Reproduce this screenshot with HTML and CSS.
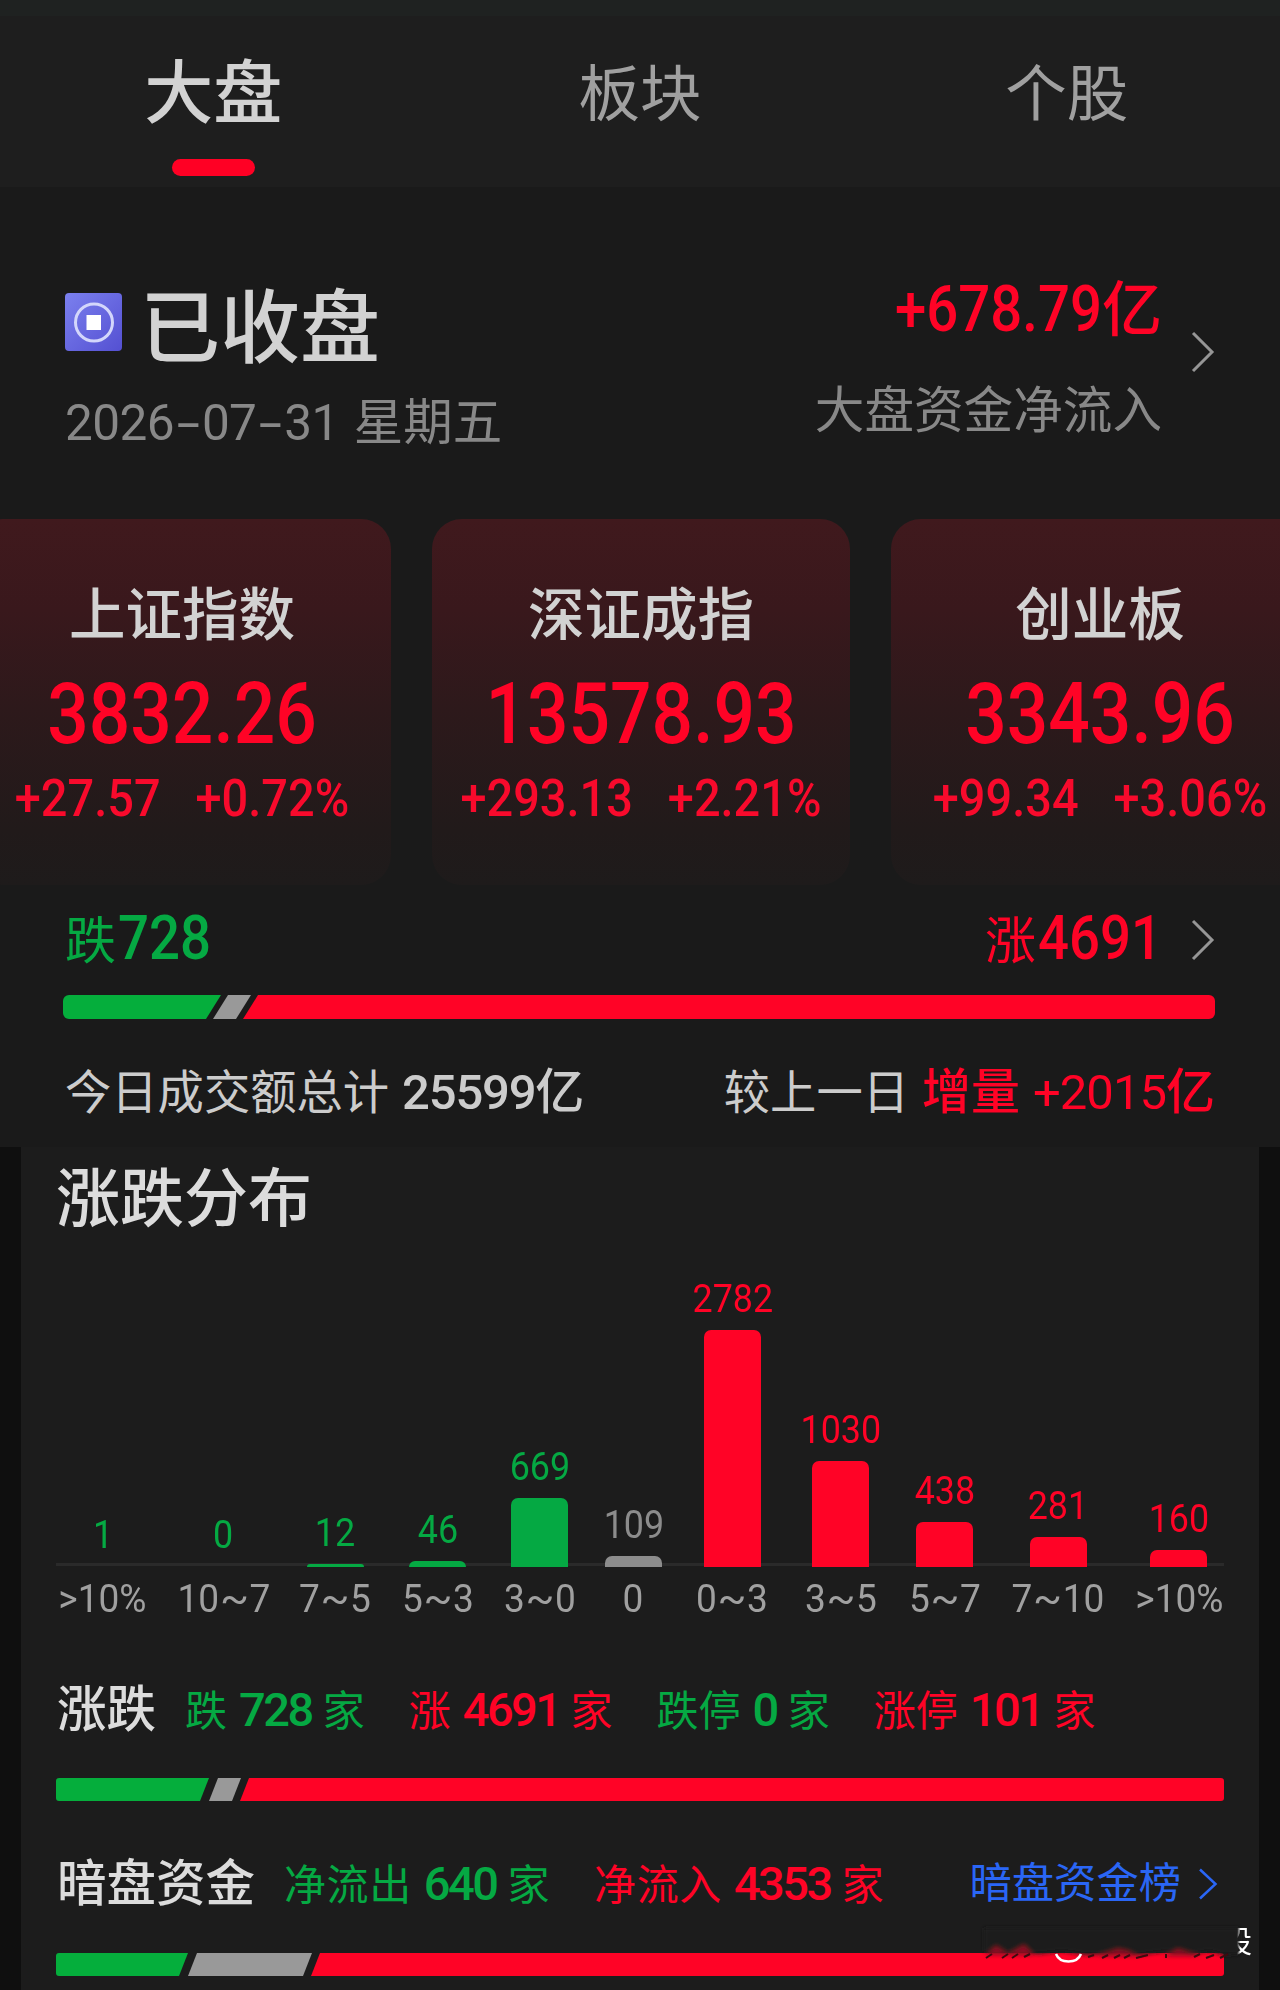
FILE: index.html
```html
<!DOCTYPE html>
<html lang="zh-CN">
<head>
    <meta charset="UTF-8">
    <meta name="viewport" content="width=device-width, initial-scale=1.0">
    <title>大盘</title>
    <link rel="stylesheet" href="styles.css">
</head>
<body>
    <nav class="tabs">
        <a class="tab active">大盘</a>
        <a class="tab">板块</a>
        <a class="tab">个股</a>
    </nav>

    <section class="summary">
        <div class="status">
            <div class="status-left">
                <div class="status-title">
                    <svg class="status-icon" viewBox="0 0 57 58">
                        <defs>
                            <linearGradient id="icon-bg" x1="0" y1="0" x2="1" y2="1">
                                <stop offset="0" stop-color="#7b80ee"/>
                                <stop offset="1" stop-color="#5450d2"/>
                            </linearGradient>
                        </defs>
                        <rect width="57" height="58" rx="4" fill="url(#icon-bg)"/>
                        <circle cx="29" cy="29.5" r="18.5" fill="none" stroke="#d3d6fb" stroke-width="3"/>
                        <rect x="21.500" y="22" width="14.500" height="15" fill="#fff"/>
                    </svg>
                    <h1>已收盘</h1>
                </div>
                <p class="date"><span class="num">2026<i>-</i>07<i>-</i>31</span><span>星期五</span></p>
            </div>
            <div class="flow">
                <p class="flow-value"><span class="num">+678.79</span>亿</p>
                <p class="flow-label">大盘资金净流入</p>
            </div>
            <svg class="chevron flow-chevron" viewBox="0 0 24 42"><path d="M2 2 21 21 2 40"/></svg>
        </div>

        <div class="indexes">
            <div class="index-card">
                <h2>上证指数</h2>
                <p class="index-value">3832.26</p>
                <p class="index-change"><span>+27.57</span><span>+0.72%</span></p>
            </div>
            <div class="index-card">
                <h2>深证成指</h2>
                <p class="index-value">13578.93</p>
                <p class="index-change"><span>+293.13</span><span>+2.21%</span></p>
            </div>
            <div class="index-card">
                <h2>创业板</h2>
                <p class="index-value">3343.96</p>
                <p class="index-change"><span>+99.34</span><span>+3.06%</span></p>
            </div>
        </div>

        <div class="breadth">
            <p class="breadth-item down">跌<span class="num">728</span></p>
            <p class="breadth-item up">涨<span class="num">4691</span></p>
            <svg class="chevron" viewBox="0 0 24 42"><path d="M2 2 21 21 2 40"/></svg>
        </div>
        <div class="ratio ratio-top">
            <div class="seg seg-down" style="width: 158px"></div>
            <div class="seg seg-flat" style="width: 38px"></div>
            <div class="seg seg-up"></div>
        </div>

        <div class="turnover">
            <p>今日成交额总计<b><span class="num">25599</span>亿</b></p>
            <p>较上一日<b class="up">增量</b><b class="up plus"><span class="num">+2015</span>亿</b></p>
        </div>
    </section>

    <section class="panel">
        <h2 class="panel-title">涨跌分布</h2>

        <div class="chart">
            <div class="col down"><span>1</span><div class="bar" style="height: 1px"></div></div>
            <div class="col down"><span>0</span><div class="bar" style="height: 1px"></div></div>
            <div class="col down"><span>12</span><div class="bar" style="height: 3px"></div></div>
            <div class="col down"><span>46</span><div class="bar" style="height: 6px"></div></div>
            <div class="col down"><span>669</span><div class="bar" style="height: 69px"></div></div>
            <div class="col flat"><span>109</span><div class="bar" style="height: 11px"></div></div>
            <div class="col up"><span>2782</span><div class="bar" style="height: 237px"></div></div>
            <div class="col up"><span>1030</span><div class="bar" style="height: 106px"></div></div>
            <div class="col up"><span>438</span><div class="bar" style="height: 45px"></div></div>
            <div class="col up"><span>281</span><div class="bar" style="height: 30px"></div></div>
            <div class="col up"><span>160</span><div class="bar" style="height: 17px"></div></div>
        </div>
        <div class="axis">
            <span>&gt;10%</span>
            <span>10<i>~</i>7</span>
            <span>7<i>~</i>5</span>
            <span>5<i>~</i>3</span>
            <span>3<i>~</i>0</span>
            <span>0</span>
            <span>0<i>~</i>3</span>
            <span>3<i>~</i>5</span>
            <span>5<i>~</i>7</span>
            <span>7<i>~</i>10</span>
            <span>&gt;10%</span>
        </div>

        <div class="row">
            <h3>涨跌</h3>
            <p class="count down">跌<b>728</b>家</p>
            <p class="count up">涨<b>4691</b>家</p>
            <p class="count down">跌停<b>0</b>家</p>
            <p class="count up">涨停<b>101</b>家</p>
        </div>
        <div class="ratio">
            <div class="seg seg-down" style="width: 153px"></div>
            <div class="seg seg-flat" style="width: 32px"></div>
            <div class="seg seg-up"></div>
        </div>

        <div class="row row-dark">
            <h3>暗盘资金</h3>
            <p class="count down">净流出<b>640</b>家</p>
            <p class="count up">净流入<b>4353</b>家</p>
            <a class="more">暗盘资金榜
                <svg viewBox="0 0 20 32"><path d="M2 1.500 17.500 16 2 30.500"/></svg>
            </a>
        </div>
        <div class="ratio">
            <div class="seg seg-down" style="width: 132px"></div>
            <div class="seg seg-flat" style="width: 124px"></div>
            <div class="seg seg-up"></div>
        </div>
    </section>

    <div class="watermark">
        <svg viewBox="0 0 280 50">
            <defs>
                <filter id="soft" x="-10%" y="-40%" width="120%" height="180%"><feGaussianBlur stdDeviation="2.200"/></filter>
                <filter id="edge" x="-10%" y="-40%" width="120%" height="180%"><feGaussianBlur stdDeviation="0.600"/></filter>
            </defs>
            <g filter="url(#soft)">
                <path d="M6 8H262V34L246 35 232 31 214 34 190 31 160 35 140 32 110 35 84 31 60 34 40 31 22 34 6 31Z" fill="#1c1c1c"/>
                <path d="M8 35 18 26 30 34 46 25 56 35ZM118 36 140 29 150 31 160 36ZM186 36 200 29 222 36Z" fill="#8d0a20"/>
            </g>
            <g filter="url(#edge)" fill="none" stroke="#3a0a10" stroke-width="2">
                <path d="M8 38 14 34M24 38 30 34M34 38 40 34M46 37 52 34M110 37 116 35M124 38 130 35M136 38 142 35M146 38 152 35M158 38 170 35M188 38V34M216 37 222 34M228 38 236 35M242 38 250 34"/>
            </g>
            <path d="M78 34C82 44 99 44 103 34" fill="none" stroke="#fff" stroke-width="2.500" filter="url(#edge)"/>
        </svg>
        <span>股</span>
    </div>
</body>
</html>
```
FILE: styles.css
```css
* {
    margin: 0;
    padding: 0;
    box-sizing: border-box;
}

body {
    width: 1280px;
    height: 1990px;
    overflow: hidden;
    position: relative;
    background: #0f0f0f;
    color: #d2d2d2;
    font-family: Roboto, "Noto Sans CJK SC", sans-serif;
}

h1, h2, h3, b {
    font-weight: 500;
}

i {
    font-style: normal;
}

.up {
    color: #ff0326;
}

.down {
    color: #05a943;
}

.flat {
    color: #8c8c8c;
}

/* tabs */
.tabs {
    display: flex;
    height: 187px;
    padding-top: 39px;
    border-top: 16px solid #1f2221;
    background: #1e1e1e;
}

.tab {
    flex: 1;
    display: flex;
    flex-direction: column;
    align-items: center;
    font-size: 61.5px;
    line-height: 80px;
    color: #a0a0a0;
}

.tab.active {
    font-size: 69px;
    font-weight: 500;
    color: #d2d2d2;
}

.tab.active::after {
    content: "";
    width: 83px;
    height: 17px;
    margin-top: 24px;
    border-radius: 9px;
    background: #ff0024;
}

/* summary */
.summary {
    height: 960px;
    padding: 97px 65px 0;
    background: #1a1a1a;
    overflow: hidden;
}

.status {
    display: flex;
    height: 166px;
}

.status-title {
    display: flex;
    gap: 18px;
}

.status-icon {
    width: 57px;
    height: 58px;
    margin-top: 9px;
}

h1 {
    font-size: 80px;
    line-height: 90px;
}

.date {
    display: flex;
    gap: 15px;
    margin-top: 21px;
    font-size: 49.5px;
    line-height: 56px;
    color: #888;
}

.date .num {
    letter-spacing: -0.6px;
}

.date i {
    display: inline-block;
    width: 28px;
    text-align: center;
    transform: scaleX(1.7);
}

.flow {
    margin-left: auto;
    margin-top: -4px;
    text-align: right;
}

.flow-value {
    font-size: 60px;
    line-height: 60px;
    font-weight: 500;
    color: #ff0326;
}

/* condensed figures, the negative margin takes back the unused width */
.flow-value .num {
    display: inline-block;
    margin-right: -28px;
    font-size: 64px;
    transform: scaleX(0.88);
    transform-origin: left;
}

.flow-label {
    margin-top: 42px;
    font-size: 49.6px;
    line-height: 56px;
    color: #888;
}

.chevron {
    width: 24px;
    height: 42px;
    margin-left: 29px;
    fill: none;
    stroke: #969696;
    stroke-width: 3;
}

.flow-chevron {
    margin-top: 47px;
}

/* index cards, the outer two run off the screen */
.indexes {
    display: flex;
    gap: 41px;
    width: 1336px;
    margin: 69px 0 0 -92px;
}

.index-card {
    flex: 1;
    height: 366px;
    padding-top: 62px;
    border-radius: 30px;
    background: linear-gradient(#40191d, #39181c 25%, #2d191b 52%, #211a1a 85%, #1e1b1b);
    text-align: center;
}

.index-card h2 {
    font-size: 56.5px;
    line-height: 70px;
}

.index-value {
    margin-top: 23px;
    font-size: 85px;
    line-height: 80px;
    font-weight: 500;
    color: #ff0326;
    transform: scaleX(0.86);
}

.index-change {
    display: flex;
    justify-content: center;
    gap: 38px;
    margin-top: 20px;
    font-size: 51px;
    line-height: 50px;
    font-weight: 500;
    color: #f80a2c;
    transform: scaleX(0.92);
}

/* up / down */
.breadth {
    display: flex;
    align-items: center;
    margin-top: 25px;
    height: 60px;
    line-height: 60px;
    font-size: 51px;
}

.breadth .num {
    display: inline-block;
    margin-left: 2px;
    font-size: 62px;
    font-weight: 500;
    transform: scaleX(0.88);
    transform-origin: left;
}

.breadth .up {
    margin-left: auto;
}

.breadth .up .num {
    margin-right: -17px;
}

.ratio {
    --slant: 9px;
    display: flex;
    height: 23px;
    border-radius: 3px;
    overflow: hidden;
}

.ratio-top {
    --slant: 15px;
    height: 24px;
    margin: 25px 0 0 -2px;
    border-radius: 6px;
}

.seg-down {
    background: #05ae3c;
    clip-path: polygon(0 0, 100% 0, calc(100% - var(--slant)) 100%, 0 100%);
}

.seg-flat {
    background: #999;
    clip-path: polygon(var(--slant) 0, 100% 0, calc(100% - var(--slant)) 100%, 0 100%);
}

.seg-up {
    flex: 1;
    margin-left: -1px;
    background: #ff0326;
    clip-path: polygon(var(--slant) 0, 100% 0, 100% 100%, 0 100%);
}

.ratio-top .seg-flat,
.ratio-top .seg-up {
    margin-left: -8px;
}

.turnover {
    display: flex;
    justify-content: space-between;
    margin-top: 44px;
    font-size: 46.3px;
    line-height: 60px;
    color: #ccc;
}

.turnover b {
    margin-left: 13px;
    font-size: 49px;
}

.turnover .plus {
    margin-left: 13px;
}

.turnover .num {
    letter-spacing: -1.2px;
}

.turnover .plus .num {
    font-weight: 400;
    letter-spacing: -1px;
}

/* distribution */
.panel {
    height: 843px;
    margin: 0 21px;
    padding: 13px 35px 0;
    background: #1c1c1c;
}

.panel-title {
    font-size: 64px;
    line-height: 80px;
    color: #dcdcdc;
}

.chart,
.axis {
    display: grid;
    grid-template-columns: 93px 93px 75px 74px 74px 58px 84px 77px 75px 96px 90px;
    justify-content: space-between;
    justify-items: center;
}

.chart {
    height: 327px;
    align-items: end;
    background: linear-gradient(#2a2a2a, #2a2a2a) left bottom 1px / 100% 3px no-repeat;
}

.col {
    display: flex;
    flex-direction: column;
    align-items: center;
    font-size: 39px;
    line-height: 40px;
}

.col span {
    transform: scaleX(0.92);
}

.bar {
    width: 57px;
    margin-top: 11px;
    border-radius: 7px 7px 0 0;
    background: currentColor;
}

.col:nth-child(-n + 2) .bar {
    background: none;
}

.axis {
    margin-top: 12px;
    font-size: 39px;
    line-height: 40px;
    color: #a0a0a0;
    white-space: nowrap;
}

.axis span {
    transform: scaleX(0.95);
}

.axis i {
    display: inline-block;
    width: 32px;
    text-align: center;
    transform: scaleX(1.15);
}

.row {
    display: flex;
    height: 60px;
    margin: 61px 0 38px;
    line-height: 60px;
    white-space: nowrap;
}

.row h3 {
    margin-left: 1px;
    margin-right: 29px;
    font-size: 49.5px;
    color: #dcdcdc;
}

.count {
    margin-right: 44px;
    font-size: 42px;
}

.count b {
    margin: 0 11px 0 12px;
    font-size: 47px;
    letter-spacing: -2.5px;
}

.row-dark {
    margin: 53px 0 39px;
}

.row-dark .count {
    letter-spacing: 0.6px;
}

.more {
    display: flex;
    align-items: center;
    gap: 17px;
    margin-left: auto;
    margin-right: 6px;
    font-size: 42.3px;
    color: #2a66f5;
}

.more svg {
    width: 20px;
    height: 32px;
    fill: none;
    stroke: currentColor;
    stroke-width: 2.5;
}

/* half wiped watermark over the last bar */
.watermark {
    position: absolute;
    left: 978px;
    top: 1920px;
    width: 280px;
    height: 50px;
}

.watermark svg {
    display: block;
    width: 280px;
    height: 50px;
}

.watermark span {
    position: absolute;
    right: 6px;
    top: 4px;
    font-size: 30px;
    line-height: 36px;
    color: #fff;
    mask-image: linear-gradient(to right, transparent 50%, #000 62%);
}
```
